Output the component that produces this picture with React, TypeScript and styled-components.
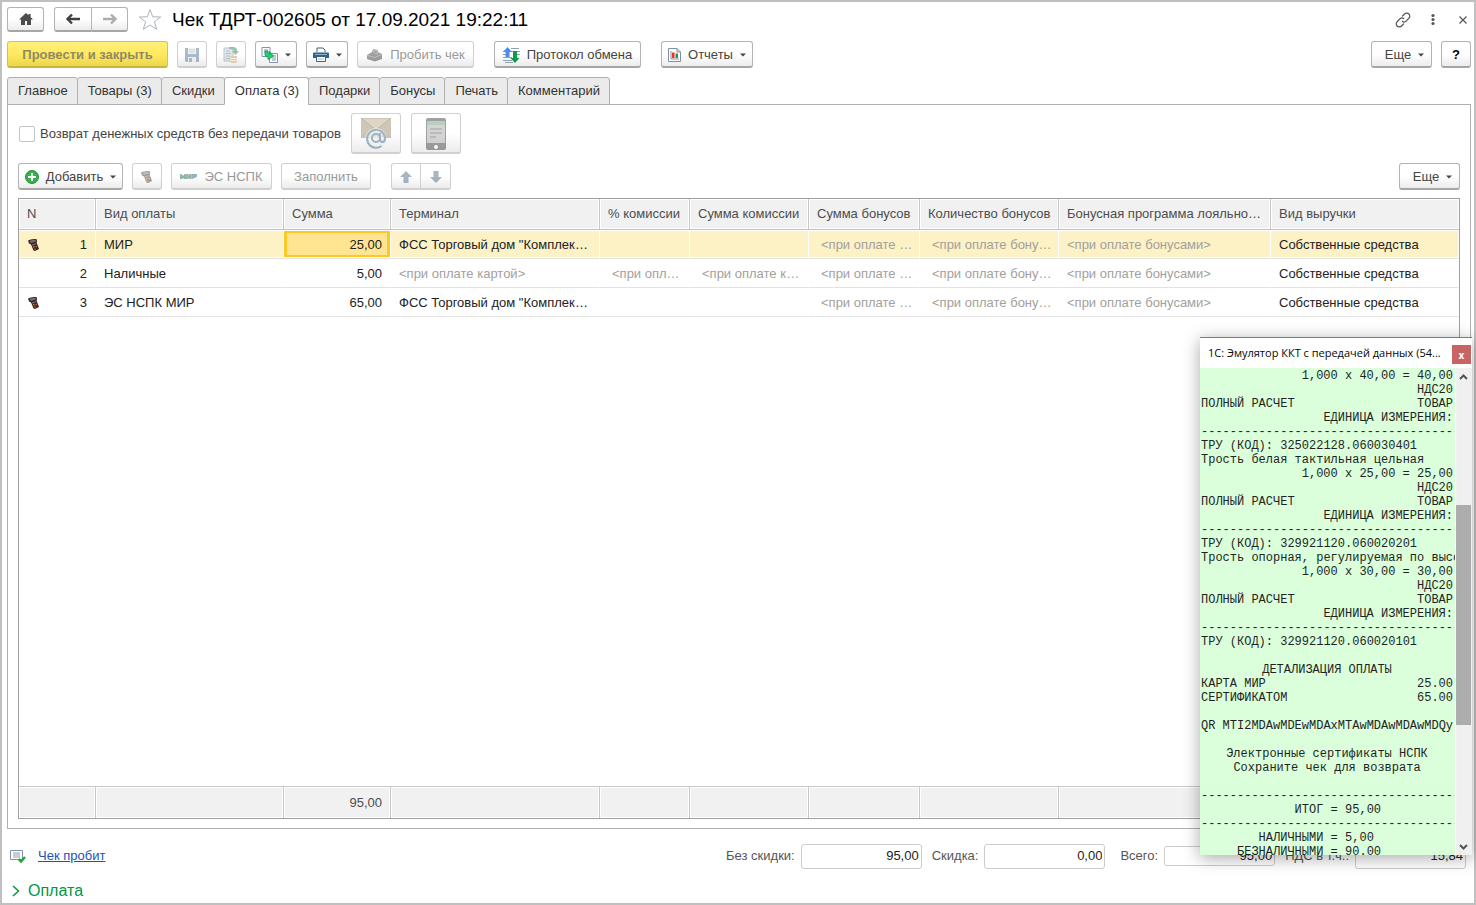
import React from "react";
import styled, { createGlobalStyle, css } from "styled-components";

const GlobalStyle = createGlobalStyle`
  * { box-sizing: border-box; }
  body {
    margin: 0;
    background: #fff;
    color: #333;
    font: 13px/16px "Liberation Sans", Arial, sans-serif;
  }
  button, input { font: inherit; color: inherit; }
`;

/* ---------- shell ---------- */

const Page = styled.div`
  position: relative;
  display: flex;
  flex-direction: column;
  min-height: 100vh;
  padding: 5px 3px 0 5px;
  border: 2px solid #c0c0c0;
`;

const TitleBar = styled.header`
  display: flex;
  align-items: center;
  height: 25px;
  gap: 10px;
`;

const Title = styled.h1`
  flex: 1;
  margin: 0;
  color: #000;
  font-size: 19px;
  line-height: 24px;
  font-weight: 400;
`;

const WindowTools = styled.div`
  display: flex;
  align-items: center;
  gap: 14px;
`;

const ToolGlyph = styled.button`
  display: flex;
  padding: 0;
  border: 0;
  background: none;
`;

const buttonFace = css`
  border: 1px solid #b3b3b3;
  border-bottom: 2px solid #a6a6a6;
  border-radius: 3px;
  background: linear-gradient(#fff 50%, #ececec);
`;

const Button = styled.button<{ $w: number; $tall?: boolean }>`
  ${buttonFace}
  display: flex;
  flex: none;
  align-items: center;
  justify-content: center;
  gap: 7px;
  width: ${(p) => p.$w}px;
  height: ${(p) => (p.$tall ? 41 : 27)}px;
  padding: 1px 0 0;
  color: #444;
  white-space: nowrap;
  &:disabled {
    color: #999;
    border-color: #d0d0d0;
  }
  &:disabled svg { opacity: 0.45; }
`;

const NavButton = styled(Button)`
  height: 25px;
  padding: 0;
`;

const MoreButton = styled(Button)`
  padding-left: 6px;
`;

const PrimaryButton = styled(Button)`
  border-color: #d8c24a;
  border-bottom-color: #c9b440;
  background: linear-gradient(#fff07a, #ffe95f 50%, #ecd64c);
  color: #8f8a66;
  font-weight: 700;
`;

const HelpButton = styled(Button)`
  color: #000;
  font-weight: 700;
`;

const ButtonPair = styled.div`
  display: flex;
  & > button:first-child { border-radius: 3px 0 0 3px; }
  & > button:last-child { border-left: 0; border-radius: 0 3px 3px 0; }
`;

const Toolbar = styled.div`
  display: flex;
  align-items: center;
  gap: 9px;
  margin-top: 9px;
`;

const Gap = styled.span`
  width: 2px;
`;

const Spacer = styled.span`
  flex: 1;
`;

/* ---------- tabs ---------- */

const Tabs = styled.div`
  display: flex;
  margin-top: 9px;
`;

const Tab = styled.button<{ $active?: boolean }>`
  position: relative;
  height: 28px;
  margin: 0 -1px -1px 0;
  padding: 0 9px 0 10px;
  border: 1px solid #b0b0b0;
  border-bottom-color: ${(p) => (p.$active ? "#fff" : "#b0b0b0")};
  border-radius: 3px 3px 0 0;
  background: ${(p) => (p.$active ? "#fff" : "#ebebeb")};
  color: #333;
`;

const Panel = styled.main`
  display: flex;
  flex: 1;
  flex-direction: column;
  padding: 8px 10px 9px;
  border: 1px solid #b0b0b0;
`;

const Options = styled.div`
  display: flex;
  align-items: center;
  gap: 10px;
`;

const CheckLabel = styled.label`
  display: flex;
  align-items: center;
  gap: 5px;
  color: #444;
`;

const Check = styled.input`
  appearance: none;
  width: 16px;
  height: 16px;
  margin: 0 0 0 1px;
  border: 1px solid #c4c4c4;
  border-radius: 2px;
  background: #fff;
`;

/* ---------- table ---------- */

const TableFrame = styled.div`
  display: flex;
  flex: 1;
  margin-top: 8px;
  border: 1px solid #a0a0a0;
`;

const Grid = styled.table`
  width: 100%;
  table-layout: fixed;
  border-collapse: separate;
  border-spacing: 0;
`;

const cell = css`
  overflow: hidden;
  padding: 0 8px;
  text-overflow: ellipsis;
  white-space: nowrap;
`;

const HeadCell = styled.th<{ $w?: number }>`
  ${cell}
  width: ${(p) => (p.$w ? `${p.$w}px` : "auto")};
  height: 31px;
  padding-right: 6px;
  border-right: 1px solid #c8c8c8;
  border-bottom: 1px solid #c0c0c0;
  background: #f1f1f1;
  box-shadow: inset 0 0 0 1px #fff;
  color: #4d4d4d;
  font-weight: 400;
  text-align: left;
  &:last-child { border-right: 0; }
`;

const FootCell = styled.td`
  ${cell}
  height: 32px;
  border-top: 1px solid #c8c8c8;
  border-right: 1px solid #c8c8c8;
  background: #f1f1f1;
  box-shadow: inset 0 0 0 1px #fff;
  color: #4d4d4d;
  text-align: right;
  &:last-child { border-right: 0; }
`;

const Row = styled.tr<{ $selected?: boolean }>`
  background: ${(p) => (p.$selected ? "#fdf1c6" : "#fff")};
`;

const Cell = styled.td<{ $right?: boolean; $hint?: boolean; $current?: boolean }>`
  ${cell}
  height: 29px;
  padding: ${(p) => (p.$hint && p.$right ? "2px 4px 0 12px" : "2px 8px 0")};
  border-right: 1px solid #fff;
  border-bottom: 1px solid #e2e2e2;
  box-shadow: inset 0 1px #fff, inset 0 -1px #fff;
  color: ${(p) => (p.$hint ? "#a3a09c" : "#222")};
  text-align: ${(p) => (p.$right ? "right" : "left")};
  ${(p) =>
    p.$current &&
    css`
      background: #ffe591;
      box-shadow: inset 0 1px #fff, inset 0 -1px #fff, inset 0 0 0 3px #fcc924;
    `}
`;

const NumberCell = styled.div`
  display: flex;
  align-items: center;
  justify-content: space-between;
`;

const Filler = styled.td`
  padding: 0;
`;

/* ---------- bottom ---------- */

const Summary = styled.div`
  display: flex;
  align-items: center;
  height: 26px;
  margin: 14px 5px 0 3px;
`;

const StateLink = styled.a`
  margin-left: 12px;
  color: #1a53b8;
`;

const Field = styled.label<{ $gap: number }>`
  display: flex;
  align-items: center;
  gap: 6px;
  margin-left: ${(p) => p.$gap}px;
  color: #555;
  white-space: nowrap;
`;

const Amount = styled.input<{ $w: number; $h: number }>`
  width: ${(p) => p.$w}px;
  height: ${(p) => p.$h}px;
  padding: 0 2px 2px;
  border: 1px solid #ccc;
  border-radius: 3px;
  background: #fff;
  color: #222;
  text-align: right;
`;

const SectionToggle = styled.button`
  display: flex;
  align-items: center;
  align-self: flex-start;
  gap: 8px;
  height: 24px;
  margin: 10px 0 0 5px;
  padding: 0;
  border: 0;
  background: none;
  color: #009646;
  font-size: 16px;
`;

/* ---------- fiscal emulator window ---------- */

const Emulator = styled.section`
  position: absolute;
  right: 2px;
  bottom: 48px;
  display: flex;
  flex-direction: column;
  width: 272px;
  height: 518px;
  border-top: 1px solid #777;
  background: #fff;
  box-shadow: 0 3px 16px rgba(0, 0, 0, 0.35);
  opacity: 0.97;
`;

const EmulatorHead = styled.div`
  display: flex;
  align-items: center;
  justify-content: space-between;
  height: 30px;
  padding: 0 1px 0 8px;
`;

const EmulatorTitle = styled.h2`
  margin: 0;
  color: #000;
  font: 400 11px/16px "Open Sans", "Noto Sans", sans-serif;
  white-space: nowrap;
`;

const CloseButton = styled.button`
  flex: none;
  width: 19px;
  height: 19px;
  margin-top: 3px;
  padding: 0;
  border: 0;
  background: #c75f5f;
  color: #fff;
  font: 700 10px/16px "Open Sans", "Noto Sans", sans-serif;
`;

const EmulatorBody = styled.div`
  display: flex;
  flex: 1;
  gap: 1px;
  min-height: 0;
`;

const Receipt = styled.div`
  flex: 1;
  overflow: hidden;
  padding: 1px 2px 0 1px;
  background: #d9ffd9;
  color: #1a1a1a;
  font: 12px/14px "Liberation Mono", "Courier New", monospace;
`;

const ReceiptLine = styled.div<{ $align: string }>`
  height: 14px;
  text-align: ${(p) => p.$align};
  white-space: pre;
`;

const ReceiptPair = styled.div`
  display: flex;
  justify-content: space-between;
  height: 14px;
`;

const ScrollBar = styled.div`
  display: flex;
  flex-direction: column;
  align-items: center;
  width: 16px;
  padding: 6px 1px 5px 0;
  background: #f0f0f0;
`;

const ScrollThumb = styled.div`
  width: 15px;
  height: 220px;
  margin: 125px 0 auto;
  background: #ababab;
`;

/* ---------- icons ---------- */

const Caret = () => (
  <svg width="6" height="4" viewBox="0 0 6 4"><path d="M0 .5h6L3 3.5z" fill="#444" /></svg>
);

const HomeIcon = () => (
  <svg width="16" height="14" viewBox="0 0 16 14">
    <path d="M8 1 1 7.4h2V13h4V9h2v4h4V7.400h2L12.600 5V2h-2v1.300z" fill="#4d4d4d" />
  </svg>
);

const ArrowIcon = ({ flip, color }: { flip?: boolean; color: string }) => (
  <svg width="16" height="12" viewBox="0 0 16 12">
    <path d="M7 1.500 2.500 6 7 10.500M3 6h12" transform={flip ? "matrix(-1 0 0 1 16 0)" : undefined} fill="none" stroke={color} strokeWidth="2.400" />
  </svg>
);

const StarIcon = () => (
  <svg width="24" height="23" viewBox="0 0 24 23">
    <path d="m12 1.500 2.700 7.300 8 .2-6.300 4.800 2.300 7.500L12 17l-6.700 4.300 2.300-7.500L1.300 9l8-.2z" fill="#fff" stroke="#a9b4bd" />
  </svg>
);

const LinkIcon = () => (
  <svg width="16" height="16" viewBox="0 0 16 16" fill="none" stroke="#555" strokeWidth="1.200" strokeLinecap="round">
    <path d="m7.500 4 2-2a3 3 0 0 1 4.400 0 3 3 0 0 1 0 4.300l-3 3a2.600 2.600 0 0 1-3.600 0M8.500 12l-2 2a3 3 0 0 1-4.400 0 3 3 0 0 1 0-4.300l3-3a2.600 2.600 0 0 1 3.600 0" />
  </svg>
);

const DotsIcon = () => (
  <svg width="16" height="14" viewBox="0 0 16 14" fill="#555">
    <circle cx="8" cy="2.500" r="1.600" /><circle cx="8" cy="6.500" r="1.600" /><circle cx="8" cy="10.500" r="1.600" />
  </svg>
);

const CrossIcon = () => (
  <svg width="16" height="8" viewBox="-4 0 16 8"><path d="m.5.5 7 7m0-7-7 7" stroke="#555" strokeWidth="1.200" /></svg>
);

const SaveIcon = () => (
  <svg width="14" height="14" viewBox="0 0 14 14">
    <path d="M0 0h14v14H1l-1-1z" fill="#4a6a84" />
    <path d="M3 0h8v6H3zM3 9h8v5H3z" fill="#dce5ea" />
    <path d="M4 2h6M4 4h6" stroke="#8fa3b2" />
    <path d="M4 10h3v4H4z" fill="#4a6a84" />
  </svg>
);

const PostIcon = () => (
  <svg width="16" height="16" viewBox="0 0 16 16">
    <path d="M1 1h9v13H1z" fill="#bccad6" stroke="#6f8496" />
    <path d="M3 4h4M3 6.500h5M3 9h4M3 11.500h4" stroke="#5f7588" />
    <path d="M6 0h4q4 0 4 4h2l-3.500 4L9 4h2q0-2-5-2z" fill="#16794d" />
    <path d="M7 9h7v6q-3.500 2-7 0z" fill="#c49c3a" /><path d="M7 11q3.500 1.500 7 0M7 13q3.500 1.500 7 0" fill="none" stroke="#eee" />
  </svg>
);

const BasedOnIcon = () => (
  <svg width="17" height="16" viewBox="0 0 17 16">
    <path d="M1 .5h8v9H1z" fill="#fff" stroke="#8195a8" /><path d="M3 3h4M3 5h4" stroke="#8195a8" />
    <path d="M8.500 6.500h8v9h-8z" fill="#fff" stroke="#8195a8" /><path d="M11 9h4M11 11h4M11 13h4" stroke="#8195a8" />
    <path d="M4 4v3.500Q4 10 7 10v2.500L12.500 9 8.500 4.500V7Q7 7 7 4z" fill="#1fd06d" stroke="#12934a" strokeWidth=".8" />
  </svg>
);

const PrintIcon = () => (
  <svg width="16" height="15" viewBox="0 0 16 15">
    <path d="M4 5V1h6l2 2v2" fill="#fff" stroke="#39617f" />
    <path d="M1 5.500h14q1 0 1 1V11H0V6.500q0-1 1-1z" fill="#2f6186" />
    <path d="M2 7.500h12" stroke="#8eb0c9" />
    <path d="M3.500 9.500h9v5h-9z" fill="#fff" stroke="#39617f" /><path d="M5 12h6" stroke="#9bb" />
  </svg>
);

const CashIcon = () => (
  <svg width="17" height="14" viewBox="0 0 17 14">
    <path d="M1 7 6 4l1-3 5 1v2l4 2v5l-7 2.500L1 11z" fill="#2c2c2c" />
    <path d="m7.500 2 4 .8v3L8 5zM1.500 7.500 9 9.500l6.500-3" fill="none" stroke="#777" />
  </svg>
);

const ExchangeIcon = () => (
  <svg width="17" height="16" viewBox="0 0 17 16">
    <path d="M0 4.500h3M0 7.500h3M0 10.500h9M0 13.500h9M8 1.500h8M8 4.500h2M14 4.500h3M14 7.500h3M2 15.500h8" stroke="#8fa2b3" />
    <path d="M4.500 0 9 5H6.500v5h-4V5H0z" fill="#4c8dee" />
    <path d="M12 16 7.500 11H10V4h4v7h2.500z" fill="#0b9a48" />
  </svg>
);

const ReportIcon = () => (
  <svg width="13" height="14" viewBox="0 0 13 14">
    <path d="M.5.5H9L12.500 4v9.500H.5z" fill="#fff" stroke="#7e8fa0" /><path d="M9 .5V4h3.500" fill="none" stroke="#7e8fa0" />
    <path d="M3 3v8h8" fill="none" stroke="#7e8fa0" />
    <path d="M4 4.500h2.500V10H4z" fill="#f03028" /><path d="M7.500 5.500H10V10H7.500z" fill="#1a9d4b" />
  </svg>
);

const MailIcon = () => (
  <svg width="32" height="32" viewBox="0 0 32 32">
    <path d="M1 0h30v20H1z" fill="#93835f" /><path d="M1 0h30L16 12z" fill="#b5a67f" stroke="#6e6044" />
    <circle cx="16" cy="20.500" r="10.500" fill="#e5e8ea" opacity=".8" />
    <circle cx="16" cy="20" r="4" fill="none" stroke="#2c5a80" strokeWidth="2" />
    <path d="M20 15v6q0 3 2.500 3T25 19.500A9 9 0 1 0 21.500 28" fill="none" stroke="#2c5a80" strokeWidth="2" />
  </svg>
);

const PhoneIcon = () => (
  <svg width="20" height="32" viewBox="0 0 20 32">
    <rect width="20" height="32" rx="2" fill="#2f2f2f" />
    <path d="M1 3h18v22H1z" fill="#a2a2a2" /><path d="M1 3h18v4H1z" fill="#5c996a" />
    <path d="M4 11h12M4 15h12M4 19h6" stroke="#555" strokeWidth="1.500" />
    <circle cx="10" cy="29" r="2" fill="#fff" />
  </svg>
);

const AddIcon = () => (
  <svg width="14" height="14" viewBox="0 0 14 14">
    <circle cx="7" cy="7" r="6.500" fill="#35b04a" stroke="#259239" /><path d="M7 3v8M3 7h8" stroke="#fff" strokeWidth="2" />
  </svg>
);

const TerminalIcon = () => (
  <svg width="14" height="14" viewBox="0 0 14 14">
    <path d="M1 2.500q3-2 8-1.500l1 .8-.3 3.200 2.300 6-4 2-1.500-.6L4 6.500 2 5.500z" fill="#33262a" />
    <path d="M2.500 3q3-1.500 6-1.200l.3 1.800-5 1.400z" fill="#7d6866" />
    <path d="m5 7 4-1.300" stroke="#8d7478" />
    <path d="m6 9 1.500-.5" stroke="#7c9e1c" strokeWidth="1.600" /><path d="m7.200 11.200 1.600-.4" stroke="#e02b1c" strokeWidth="1.600" /><path d="m8.500 8.800 1.400-.4" stroke="#f05020" strokeWidth="1.500" />
  </svg>
);

const MirLogo = () => (
  <svg width="17" height="5" viewBox="0 0 17 5" fill="none" stroke="#0d5a3c" strokeWidth="2">
    <path d="M1 5V1l2 2.500L5 1v4M7.200 0v4.200L10.200.8V5" /><path d="M12.300 5V1h4q0 2-3.200 2" stroke="#1c5670" />
  </svg>
);

const MoveIcon = ({ down }: { down?: boolean }) => (
  <svg width="12" height="12" viewBox="0 0 12 12">
    <path d="M6 0l6 6H8.500v6h-5V6H0z" transform={down ? "rotate(180 6 6)" : undefined} fill="#3d5f78" />
  </svg>
);

const StateIcon = () => (
  <svg width="16" height="13" viewBox="0 0 16 13">
    <path d="M.5.5h12v9H.5z" fill="#fff" stroke="#7f93a8" /><path d="M3 3h7M3 5h7M3 7h7" stroke="#8b9aab" />
    <path d="m8.500 9 2.500 2.500L15 7" fill="none" stroke="#20a637" strokeWidth="2.400" />
  </svg>
);

const SectionIcon = () => (
  <svg width="8" height="12" viewBox="0 0 8 12"><path d="m1 1 5.500 5L1 11" fill="none" stroke="#009646" strokeWidth="1.500" /></svg>
);

const ScrollArrow = ({ down }: { down?: boolean }) => (
  <svg width="9" height="6" viewBox="0 0 9 6">
    <path d="m1 5 3.500-3.500L8 5" transform={down ? "rotate(180 4.500 3)" : undefined} fill="none" stroke="#505050" strokeWidth="2" />
  </svg>
);

/* ---------- data ---------- */

const TABS = ["Главное", "Товары (3)", "Скидки", "Оплата (3)", "Подарки", "Бонусы", "Печать", "Комментарий"];

const COLUMNS: { title: string; width?: number }[] = [
  { title: "N", width: 77 },
  { title: "Вид оплаты", width: 188 },
  { title: "Сумма", width: 107 },
  { title: "Терминал", width: 209 },
  { title: "% комиссии", width: 90 },
  { title: "Сумма комиссии", width: 119 },
  { title: "Сумма бонусов", width: 111 },
  { title: "Количество бонусов", width: 139 },
  { title: "Бонусная программа лояльности", width: 212 },
  { title: "Вид выручки" },
];

const BY_CARD = "<при оплате картой>";
const BY_BONUS = "<при оплате бонусами>";

const ROWS = [
  { n: 1, kind: "МИР", sum: "25,00", terminal: 'ФСС Торговый дом "Комплексный"' },
  { n: 2, kind: "Наличные", sum: "5,00" },
  { n: 3, kind: "ЭС НСПК МИР", sum: "65,00", terminal: 'ФСС Торговый дом "Комплексный"' },
];

type Line = string | [string, string];
const RULE = "-".repeat(36);
const item = (price: string): Line[] => [
  [">", `1,000 x ${price} = ${price}`],
  [">", "НДС20"],
  ["ПОЛНЫЙ РАСЧЕТ", "ТОВАР"],
  [">", "ЕДИНИЦА ИЗМЕРЕНИЯ:"],
  RULE,
];

const RECEIPT: Line[] = [
  ...item("40,00"),
  "ТРУ (КОД): 325022128.060030401",
  "Трость белая тактильная цельная",
  ...item("25,00"),
  "ТРУ (КОД): 329921120.060020201",
  "Трость опорная, регулируемая по высо",
  ...item("30,00"),
  "ТРУ (КОД): 329921120.060020101",
  "",
  ["=", "ДЕТАЛИЗАЦИЯ ОПЛАТЫ"],
  ["КАРТА МИР", "25.00"],
  ["СЕРТИФИКАТОМ", "65.00"],
  "",
  ["=", "QR MTI2MDAwMDEwMDAxMTAwMDAwMDAwMDQy"],
  "",
  ["=", "Электронные сертификаты НСПК"],
  ["=", "Сохраните чек для возврата"],
  "",
  RULE,
  " ".repeat(13) + "ИТОГ = 95,00",
  RULE,
  " ".repeat(8) + "НАЛИЧНЫМИ = 5,00",
  " ".repeat(5) + "БЕЗНАЛИЧНЫМИ = 90.00",
];

const renderLine = (line: Line, i: number) => {
  if (typeof line === "string") return <ReceiptLine key={i} $align="left">{line}</ReceiptLine>;
  const [left, right] = line;
  if (left === ">") return <ReceiptLine key={i} $align="right">{right}</ReceiptLine>;
  if (left === "=") return <ReceiptLine key={i} $align="center">{right}</ReceiptLine>;
  return <ReceiptPair key={i}><span>{left}</span><span>{right}</span></ReceiptPair>;
};

export default function App() {
  return (
    <Page>
      <GlobalStyle />
      <TitleBar>
        <NavButton $w={37} aria-label="Домой"><HomeIcon /></NavButton>
        <ButtonPair>
          <NavButton $w={38} aria-label="Назад"><ArrowIcon color="#404040" /></NavButton>
          <NavButton $w={36} aria-label="Вперед"><ArrowIcon flip color="#adadad" /></NavButton>
        </ButtonPair>
        <ToolGlyph aria-label="В избранное"><StarIcon /></ToolGlyph>
        <Title>Чек ТДРТ-002605 от 17.09.2021 19:22:11</Title>
        <WindowTools>
          <ToolGlyph aria-label="Ссылка"><LinkIcon /></ToolGlyph>
          <ToolGlyph aria-label="Меню"><DotsIcon /></ToolGlyph>
          <ToolGlyph aria-label="Закрыть"><CrossIcon /></ToolGlyph>
        </WindowTools>
      </TitleBar>

      <Toolbar>
        <PrimaryButton $w={161}>Провести и закрыть</PrimaryButton>
        <Button $w={30} disabled aria-label="Записать"><SaveIcon /></Button>
        <Button $w={30} disabled aria-label="Провести"><PostIcon /></Button>
        <Button $w={42} aria-label="Создать на основании"><BasedOnIcon /><Caret /></Button>
        <Button $w={42} aria-label="Печать"><PrintIcon /><Caret /></Button>
        <Button $w={117} disabled><CashIcon />Пробить чек</Button>
        <Gap />
        <Button $w={147}><ExchangeIcon />Протокол обмена</Button>
        <Gap />
        <Button $w={92}><ReportIcon />Отчеты<Caret /></Button>
        <Spacer />
        <MoreButton $w={61}>Еще<Caret /></MoreButton>
        <HelpButton $w={30}>?</HelpButton>
      </Toolbar>

      <Tabs role="tablist">
        {TABS.map((t, i) => (
          <Tab key={t} role="tab" aria-selected={i === 3} $active={i === 3}>{t}</Tab>
        ))}
      </Tabs>

      <Panel>
        <Options>
          <CheckLabel><Check type="checkbox" />Возврат денежных средств без передачи товаров</CheckLabel>
          <Button $w={50} $tall disabled aria-label="Отправить по почте"><MailIcon /></Button>
          <Button $w={50} $tall disabled aria-label="Отправить на телефон"><PhoneIcon /></Button>
        </Options>

        <Toolbar>
          <Button $w={105}><AddIcon />Добавить<Caret /></Button>
          <Button $w={30} disabled aria-label="Терминал"><TerminalIcon /></Button>
          <Button $w={101} disabled><MirLogo />ЭС НСПК</Button>
          <Button $w={90} disabled>Заполнить</Button>
          <Gap />
          <ButtonPair>
            <Button $w={30} disabled aria-label="Вверх"><MoveIcon /></Button>
            <Button $w={30} disabled aria-label="Вниз"><MoveIcon down /></Button>
          </ButtonPair>
          <Spacer />
          <MoreButton $w={61}>Еще<Caret /></MoreButton>
        </Toolbar>

        <TableFrame>
          <Grid>
            <thead>
              <tr>{COLUMNS.map((c) => <HeadCell key={c.title} $w={c.width}>{c.title}</HeadCell>)}</tr>
            </thead>
            <tbody>
              {ROWS.map((r) => (
                <Row key={r.n} $selected={r.n === 1}>
                  <Cell>
                    <NumberCell>{r.terminal ? <TerminalIcon /> : <span />}<span>{r.n}</span></NumberCell>
                  </Cell>
                  <Cell>{r.kind}</Cell>
                  <Cell $right $current={r.n === 1}>{r.sum}</Cell>
                  <Cell $hint={!r.terminal}>{r.terminal ?? BY_CARD}</Cell>
                  <Cell $right $hint>{r.terminal ? "" : BY_CARD}</Cell>
                  <Cell $right $hint>{r.terminal ? "" : BY_CARD}</Cell>
                  <Cell $right $hint>{BY_BONUS}</Cell>
                  <Cell $right $hint>{BY_BONUS}</Cell>
                  <Cell $hint>{BY_BONUS}</Cell>
                  <Cell>Собственные средства</Cell>
                </Row>
              ))}
              <tr><Filler colSpan={10} /></tr>
            </tbody>
            <tfoot>
              <tr>{COLUMNS.map((c, i) => <FootCell key={c.title}>{i === 2 ? "95,00" : ""}</FootCell>)}</tr>
            </tfoot>
          </Grid>
        </TableFrame>
      </Panel>

      <Summary>
        <StateIcon />
        <StateLink href="#receipt">Чек пробит</StateLink>
        <Spacer />
        <Field $gap={10}>Без скидки:<Amount $w={121} $h={25} defaultValue="95,00" /></Field>
        <Field $gap={10}>Скидка:<Amount $w={121} $h={25} defaultValue="0,00" /></Field>
        <Field $gap={15}>Всего:<Amount $w={111} $h={20} defaultValue="95,00" /></Field>
        <Field $gap={10}>НДС в т.ч.:<Amount $w={111} $h={25} defaultValue="15,84" /></Field>
      </Summary>
      <SectionToggle><SectionIcon />Оплата</SectionToggle>

      <Emulator>
        <EmulatorHead>
          <EmulatorTitle>1С: Эмулятор ККТ с передачей данных (54...</EmulatorTitle>
          <CloseButton aria-label="Закрыть окно">x</CloseButton>
        </EmulatorHead>
        <EmulatorBody>
          <Receipt>{RECEIPT.map(renderLine)}</Receipt>
          <ScrollBar>
            <ScrollArrow />
            <ScrollThumb />
            <ScrollArrow down />
          </ScrollBar>
        </EmulatorBody>
      </Emulator>
    </Page>
  );
}
